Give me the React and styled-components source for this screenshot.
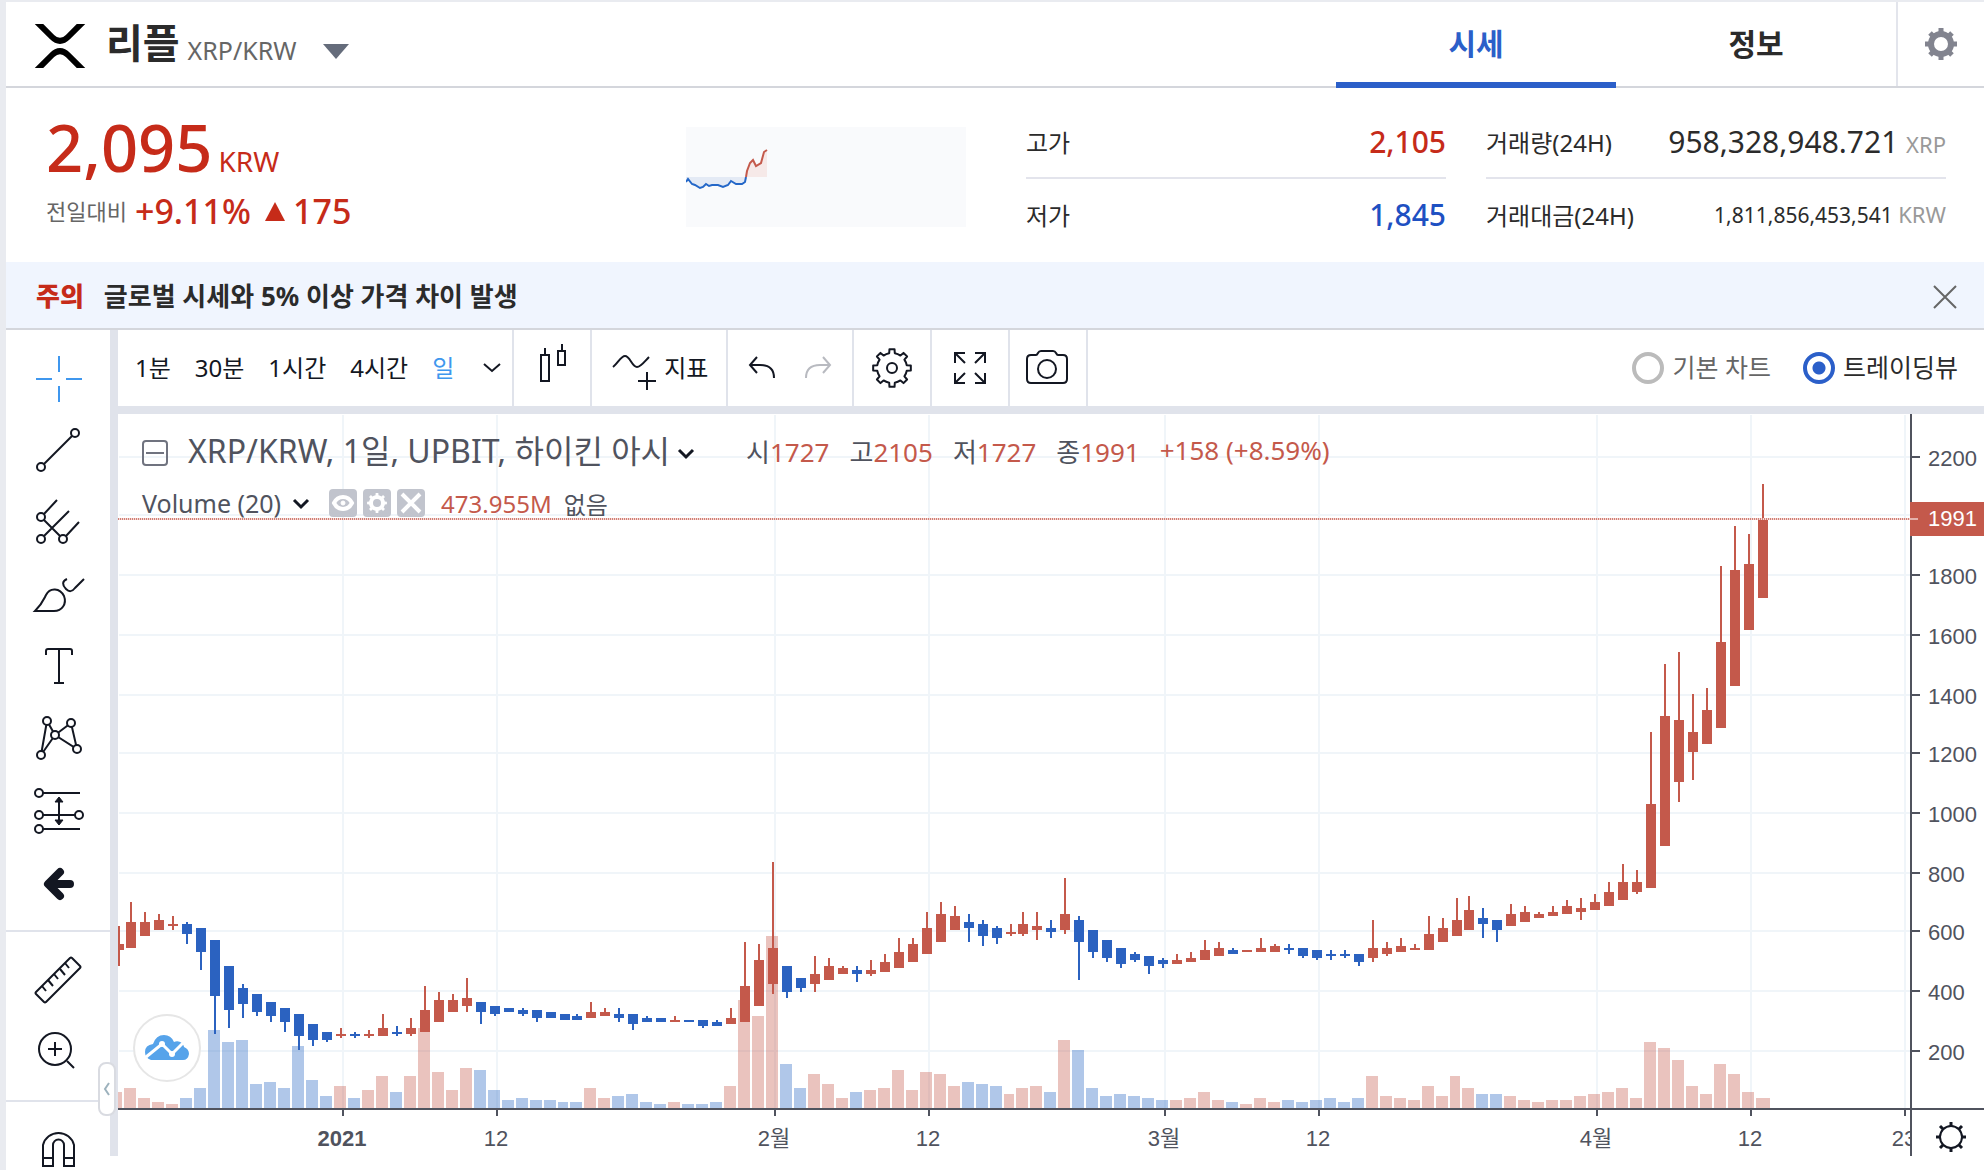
import React, { useState } from "react";
import styled, { createGlobalStyle } from "styled-components";

const RED = "#c4594b";
const BLUE = "#2b62c0";

// [up?, high, body top, body bottom, low, volume] for each day, heights in chart pixels
const CANDLES = [
  [1, 86, 104, 110, 126, 16], [1, 62, 82, 108, 108, 20], [1, 72, 82, 96, 96, 10],
  [1, 74, 80, 90, 90, 6], [1, 76, 84, 86, 90, 4], [0, 82, 84, 94, 104, 10],
  [0, 88, 88, 112, 130, 20], [0, 100, 100, 156, 194, 78], [0, 126, 126, 170, 188, 66],
  [0, 144, 148, 164, 178, 68], [0, 154, 154, 172, 176, 24], [0, 162, 162, 176, 182, 26],
  [0, 168, 168, 182, 192, 20], [0, 174, 174, 196, 210, 62], [0, 184, 184, 200, 206, 28],
  [0, 192, 192, 200, 202, 12], [1, 188, 194, 196, 198, 22], [0, 192, 194, 196, 198, 10],
  [1, 190, 194, 196, 198, 18], [1, 174, 188, 196, 196, 32], [0, 186, 192, 194, 196, 16],
  [1, 178, 188, 194, 196, 32], [1, 146, 170, 192, 192, 80], [1, 152, 160, 182, 182, 36],
  [1, 154, 160, 172, 172, 18], [1, 138, 158, 166, 172, 40], [0, 162, 162, 172, 184, 38],
  [0, 166, 166, 174, 176, 18], [0, 168, 168, 172, 172, 8], [0, 168, 170, 174, 176, 10],
  [0, 170, 170, 178, 182, 8], [0, 172, 172, 178, 178, 8], [0, 174, 174, 180, 180, 6],
  [0, 174, 176, 180, 180, 6], [1, 162, 172, 178, 178, 20], [1, 168, 172, 176, 176, 10],
  [0, 168, 174, 178, 182, 12], [0, 174, 174, 184, 190, 14], [0, 176, 178, 182, 182, 6],
  [0, 178, 178, 182, 182, 4], [1, 176, 180, 182, 182, 6], [0, 180, 180, 182, 182, 4],
  [0, 180, 180, 186, 188, 4], [0, 180, 182, 186, 186, 6], [1, 168, 178, 184, 184, 22],
  [1, 102, 146, 182, 182, 108], [1, 104, 120, 166, 166, 92], [1, 22, 108, 144, 154, 172],
  [0, 126, 126, 152, 158, 44], [0, 138, 138, 148, 152, 20], [1, 116, 134, 144, 152, 34],
  [1, 118, 126, 140, 140, 24], [1, 126, 128, 134, 134, 10], [0, 126, 130, 134, 142, 16],
  [1, 120, 130, 134, 136, 18], [1, 114, 122, 132, 132, 20], [1, 98, 112, 128, 128, 38],
  [1, 98, 104, 122, 122, 18], [1, 72, 88, 114, 114, 36], [1, 62, 74, 102, 102, 34],
  [1, 66, 76, 90, 90, 22], [0, 74, 82, 88, 102, 26], [0, 80, 84, 96, 106, 24],
  [0, 86, 88, 98, 104, 22], [1, 84, 92, 94, 96, 14], [1, 72, 84, 94, 96, 20],
  [1, 72, 86, 90, 100, 22], [0, 80, 88, 92, 98, 16], [1, 38, 74, 90, 94, 68],
  [0, 76, 80, 102, 140, 58], [0, 90, 90, 112, 118, 20], [0, 100, 100, 118, 122, 12],
  [0, 108, 108, 124, 128, 14], [0, 112, 114, 120, 122, 12], [0, 116, 116, 126, 134, 10],
  [0, 118, 120, 124, 128, 8], [1, 114, 120, 124, 124, 8], [1, 112, 118, 122, 122, 10],
  [1, 100, 110, 120, 120, 16], [1, 102, 108, 116, 116, 8], [0, 108, 110, 114, 114, 6],
  [1, 110, 110, 112, 112, 4], [1, 98, 108, 112, 112, 10], [1, 104, 106, 112, 112, 6],
  [0, 104, 108, 110, 114, 8], [0, 108, 108, 116, 118, 6], [0, 110, 110, 118, 120, 8],
  [0, 110, 114, 116, 120, 10], [0, 110, 114, 116, 118, 6], [0, 114, 114, 122, 126, 10],
  [1, 80, 108, 118, 122, 32], [1, 102, 108, 114, 116, 12], [1, 98, 106, 112, 112, 10],
  [1, 104, 108, 110, 110, 8], [1, 76, 94, 110, 110, 22], [1, 78, 88, 102, 102, 12],
  [1, 58, 80, 96, 96, 32], [1, 56, 70, 90, 90, 20], [0, 68, 78, 84, 98, 14],
  [0, 80, 80, 90, 102, 14], [1, 64, 74, 86, 86, 12], [1, 66, 72, 82, 82, 8],
  [1, 72, 74, 78, 78, 6], [1, 66, 72, 76, 76, 8], [1, 60, 66, 74, 74, 8],
  [1, 58, 68, 72, 80, 12], [1, 54, 62, 70, 70, 14], [1, 42, 52, 66, 66, 16],
  [1, 24, 42, 60, 60, 20], [1, 30, 42, 52, 54, 10], [1, -108, -36, 48, 48, 66],
  [1, -176, -124, 6, 6, 60], [1, -188, -120, -58, -38, 48], [1, -146, -108, -88, -60, 22],
  [1, -152, -130, -96, -96, 14], [1, -274, -198, -112, -112, 44], [1, -314, -270, -154, -154, 34],
  [1, -306, -276, -210, -210, 16], [1, -356, -322, -242, -242, 10],
];

const PRICES = [
  { y: 43, label: "2200" },
  { y: 101, label: "" },
  { y: 161, label: "1800" },
  { y: 221, label: "1600" },
  { y: 281, label: "1400" },
  { y: 339, label: "1200" },
  { y: 399, label: "1000" },
  { y: 459, label: "800" },
  { y: 517, label: "600" },
  { y: 577, label: "400" },
  { y: 637, label: "200" },
];

const DATES = [
  { x: 225, label: "2021", bold: true },
  { x: 379, label: "12" },
  { x: 657, label: "2월" },
  { x: 811, label: "12" },
  { x: 1047, label: "3월" },
  { x: 1201, label: "12" },
  { x: 1479, label: "4월" },
  { x: 1633, label: "12" },
  { x: 1787, label: "23" },
];

const PLOT_HEIGHT = 694;
const CANDLE_TOP = 426;
const PRICE_LINE = 105;

const candleX = (index) => {
  const i = index - 1;
  return 13 + 14 * i - 2 * Math.floor(i / 32);
};

const gearPath = (c, outer, inner, teeth) => {
  const step = (Math.PI * 2) / teeth;
  const at = (r, a) =>
    `${(c + r * Math.sin(a)).toFixed(2)} ${(c - r * Math.cos(a)).toFixed(2)}`;
  let d = "";
  for (let i = 0; i < teeth; i++) {
    const a = i * step;
    d += `${i ? "L" : "M"}${at(inner, a - step * 0.24)} L${at(outer, a - step * 0.17)} L${at(outer, a + step * 0.17)} L${at(inner, a + step * 0.24)} `;
    d += `A${inner} ${inner} 0 0 1 ${at(inner, a + step * 0.76)} `;
  }
  return d + "Z";
};

const TOOLS = [
  {
    name: "십자선",
    active: true,
    icon: <path d="M25 2v16M25 32v16M2 25h16M32 25h16" />,
  },
  {
    name: "추세선",
    icon: (
      <>
        <path d="M10 38L38 10" />
        <circle cx="7" cy="41" r="4" />
        <circle cx="41" cy="7" r="4" />
      </>
    ),
  },
  {
    name: "피치포크",
    icon: (
      <>
        <path d="M10 16L23 2M10 38L35 13M32 38L45 24M10 22L26 38" />
        <circle cx="7" cy="19" r="4" />
        <circle cx="7" cy="41" r="4" />
        <circle cx="29" cy="41" r="4" />
      </>
    ),
  },
  {
    name: "브러시",
    icon: (
      <path d="M1 41C8 34 9 31 12 25C16 17 26 18 30 26C33 34 28 41 20 41ZM33 9C28 11 28 15 32 19C35 22 38 22 41 18L50 9" />
    ),
  },
  {
    name: "텍스트",
    icon: <path d="M12 13V9Q12 7 14 7H36Q38 7 38 9V13M25 7V41M20 41H30" />,
  },
  {
    name: "패턴",
    icon: (
      <>
        <path d="M7 41L13 7L21 21ZM21 21L37 9L43 35Z" />
        <circle cx="13" cy="7" r="4" />
        <circle cx="37" cy="9" r="4" />
        <circle cx="21" cy="21" r="4" />
        <circle cx="43" cy="35" r="4" />
        <circle cx="7" cy="41" r="4" />
      </>
    ),
  },
  {
    name: "예측",
    icon: (
      <>
        <path d="M9 7H46M9 29H41M9 43H46M25 13V37" />
        <circle cx="5" cy="7" r="4" />
        <circle cx="5" cy="29" r="4" />
        <circle cx="5" cy="43" r="4" />
        <circle cx="45" cy="29" r="4" />
        <path d="M25 11L29 16H21ZM25 39L29 34H21Z" fill="currentColor" strokeWidth="1" />
      </>
    ),
  },
  {
    name: "아이콘",
    icon: (
      <path
        d="M36 26H15M26 14L14 26L26 38"
        strokeWidth="8"
        strokeLinecap="round"
        strokeLinejoin="round"
      />
    ),
  },
];

const MEASURE_TOOLS = [
  {
    name: "자",
    icon: (
      <>
        <path d="M2 36L36 2Q37 1 38 2L46 10Q47 11 46 12L12 46Q11 47 10 46L2 38Q1 37 2 36Z" />
        <path d="M8 30L12 35M14 24L19 30M20 18L24 23M26 13L31 19M31 7L35 12" />
      </>
    ),
  },
  {
    name: "확대",
    icon: (
      <>
        <circle cx="21" cy="21" r="16" />
        <path d="M14 21H28M21 14V28M33 33L40 40" />
      </>
    ),
  },
];

const MAGNET = (
  <path d="M9 40V19A16 16 0 0 1 40 19V40H30V19A5 5 0 0 0 19 19V40ZM9 32H19M30 32H40" />
);

const INTERVALS = ["1분", "30분", "1시간", "4시간", "일"];

const LineIcon = ({ children, width = 48 }) => (
  <Glyph width={width} height="48" viewBox={`0 0 ${width} 48`}>
    {children}
  </Glyph>
);

const Header = () => {
  const [tab, setTab] = useState("시세");
  return (
    <HeaderBar>
      <CoinButton>
        <svg width="52" height="44" viewBox="0 0 52 44" fill="none" stroke="#000" strokeWidth="6">
          <path d="M2 -3L18 13Q26 21 34 13L50 -3M2 47L18 31Q26 23 34 31L50 47" />
        </svg>
        <CoinName>리플</CoinName>
        <CoinPair>XRP/KRW</CoinPair>
        <CoinArrow width="26" height="15" viewBox="0 0 26 15">
          <path d="M0 0H26L13 15Z" fill="#656c7b" />
        </CoinArrow>
      </CoinButton>
      <Tabs>
        {["시세", "정보"].map((name) => (
          <Tab key={name} $active={tab === name} onClick={() => setTab(name)}>
            {name}
          </Tab>
        ))}
        <SettingsButton aria-label="설정">
          <svg width="34" height="34" viewBox="0 0 34 34" fill="none" stroke="#82848f">
            <circle cx="17" cy="17" r="10" strokeWidth="6" />
            <path
              d="M17 1v5M17 28v5M1 17h5M28 17h5M6 6l3 3M25 25l3 3M28 6l-3 3M6 28l3-3"
              strokeWidth="5"
            />
          </svg>
        </SettingsButton>
      </Tabs>
    </HeaderBar>
  );
};

const Summary = () => (
  <SummaryBar>
    <PriceBlock>
      <PriceLine>
        <Price>2,095</Price>
        <PriceUnit>KRW</PriceUnit>
      </PriceLine>
      <ChangeLine>
        <ChangeLabel>전일대비</ChangeLabel>
        <Change>+9.11%</Change>
        <ChangeArrow width="20" height="19" viewBox="0 0 20 19">
          <path d="M10 0L20 19H0Z" fill="#c62b19" />
        </ChangeArrow>
        <Change>175</Change>
      </ChangeLine>
    </PriceBlock>
    <Spark viewBox="0 0 280 100" fill="none">
      <path
        d="M0 50V55L2 52L6 57L9 58L14 61L17 60L20 57L23 59L26 58L32 58L37 60L42 58L45 54L50 57L56 57L59 55L60 50Z"
        fill="#e4eaf5"
      />
      <path d="M60 50L61 44L64 36L67 33L70 39L75 36L78 25L81 23V50Z" fill="#f6e9e8" />
      <path
        d="M0 55L2 52L6 57L9 58L14 61L17 60L20 57L23 59L26 58L32 58L37 60L42 58L45 54L50 57L56 57L59 55L60 50"
        stroke="#2467c8"
        strokeWidth="2"
      />
      <path d="M60 50L61 44L64 36L67 33L70 39L75 36L78 25L81 23" stroke={RED} strokeWidth="2" />
    </Spark>
    <Stats $width={420}>
      <Stat>
        <dt>고가</dt>
        <StatValue $color="#c62b19" $strong>2,105</StatValue>
      </Stat>
      <Stat>
        <dt>저가</dt>
        <StatValue $color="#1e50c2" $strong>1,845</StatValue>
      </Stat>
    </Stats>
    <Stats $width={460}>
      <Stat>
        <dt>거래량(24H)</dt>
        <StatValue>
          958,328,948.721 <Unit>XRP</Unit>
        </StatValue>
      </Stat>
      <Stat>
        <dt>거래대금(24H)</dt>
        <StatValue $small>
          1,811,856,453,541 <Unit>KRW</Unit>
        </StatValue>
      </Stat>
    </Stats>
  </SummaryBar>
);

const Toolbar = () => {
  const [interval, setInterval] = useState("일");
  const [chart, setChart] = useState("tv");
  return (
    <ToolbarRow>
      <Intervals>
        {INTERVALS.map((name) => (
          <IntervalButton key={name} $active={interval === name} onClick={() => setInterval(name)}>
            {name}
          </IntervalButton>
        ))}
        <IntervalButton aria-label="더보기">
          <Glyph width="24" height="16" viewBox="0 0 24 16">
            <path d="M4 6L12 13L20 6" />
          </Glyph>
        </IntervalButton>
      </Intervals>
      <ToolbarButton aria-label="차트 종류">
        <LineIcon>
          <path d="M13 11H21V37H13ZM17 4V11M30 7H37V21H30ZM34 0V7" />
        </LineIcon>
      </ToolbarButton>
      <ToolbarButton $wide>
        <LineIcon>
          <path d="M3 23C8 19 11 12 15 12C20 12 22 23 27 23C31 23 34 18 39 13M37 28V46M28 37H46" />
        </LineIcon>
        <ButtonText>지표</ButtonText>
      </ToolbarButton>
      <HistoryGroup>
        <PlainButton aria-label="실행 취소">
          <LineIcon width={28}>
            <path d="M9 13L2 21L9 29M2 21H12C22 21 26 26 26 34" />
          </LineIcon>
        </PlainButton>
        <PlainButton aria-label="다시 실행" disabled>
          <LineIcon width={28}>
            <path d="M19 13L26 21L19 29M26 21H16C6 21 2 26 2 34" />
          </LineIcon>
        </PlainButton>
      </HistoryGroup>
      <ToolbarButton aria-label="차트 설정">
        <LineIcon>
          <path d={gearPath(24, 19, 15, 8)} strokeLinejoin="round" />
          <circle cx="24" cy="24" r="5" />
        </LineIcon>
      </ToolbarButton>
      <ToolbarButton aria-label="전체 화면">
        <LineIcon>
          <path d="M9 19V9H19M9 9L19 19M29 9H39V19M39 9L29 19M9 29V39H19M9 39L19 29M39 29V39H29M39 39L29 29" />
        </LineIcon>
      </ToolbarButton>
      <ToolbarButton aria-label="스냅샷">
        <LineIcon>
          <path d="M7 11H12Q13 11 14 9Q15 7 17 7H29Q31 7 32 9Q33 11 34 11H39Q43 11 43 15V35Q43 39 39 39H7Q3 39 3 35V15Q3 11 7 11Z" />
          <circle cx="23" cy="25" r="9" />
        </LineIcon>
      </ToolbarButton>
      <ChartSwitch>
        <RadioLabel $checked={chart === "basic"}>
          <Radio
            type="radio"
            name="chart"
            checked={chart === "basic"}
            onChange={() => setChart("basic")}
          />
          <ButtonText>기본 차트</ButtonText>
        </RadioLabel>
        <RadioLabel $checked={chart === "tv"}>
          <Radio
            type="radio"
            name="chart"
            checked={chart === "tv"}
            onChange={() => setChart("tv")}
          />
          <ButtonText>트레이딩뷰</ButtonText>
        </RadioLabel>
      </ChartSwitch>
    </ToolbarRow>
  );
};

const Legend = () => (
  <LegendBox>
    <LegendRow>
      <PlainButton aria-label="접기">
        <svg width="26" height="26" viewBox="0 0 26 26" fill="none" stroke="#70737f" strokeWidth="2">
          <rect x="1" y="1" width="24" height="24" rx="3" />
          <path d="M4 13H22" />
        </svg>
      </PlainButton>
      <Symbol>XRP/KRW, 1일, UPBIT, 하이킨 아시</Symbol>
      <Chevron />
      <Ohlc>
        <span>시<b>1727</b></span>
        <span>고<b>2105</b></span>
        <span>저<b>1727</b></span>
        <span>종<b>1991</b></span>
        <b>+158 (+8.59%)</b>
      </Ohlc>
    </LegendRow>
    <LegendRow $small>
      <StudyName>Volume (20)</StudyName>
      <Chevron />
      <StudyButtons>
        <StudyButton aria-label="숨기기">
          <svg width="28" height="28" viewBox="0 0 28 28" fill="none" stroke="#fff">
            <path d="M5 14C9 6 19 6 23 14C19 22 9 22 5 14Z" strokeWidth="4" />
            <circle cx="14" cy="14" r="2" fill="#fff" strokeWidth="1" />
          </svg>
        </StudyButton>
        <StudyButton aria-label="설정">
          <svg width="28" height="28" viewBox="0 0 28 28">
            <path
              d={gearPath(14, 10, 8, 8) + "M14 10A4 4 0 1 0 14 18A4 4 0 1 0 14 10Z"}
              fill="#fff"
              fillRule="evenodd"
            />
          </svg>
        </StudyButton>
        <StudyButton aria-label="삭제">
          <svg width="28" height="28" viewBox="0 0 28 28" stroke="#fff" strokeWidth="4">
            <path d="M5 5L23 23M23 5L5 23" />
          </svg>
        </StudyButton>
      </StudyButtons>
      <b>473.955M</b>
      <span>없음</span>
    </LegendRow>
  </LegendBox>
);

const Chevron = () => (
  <Glyph width="16" height="16" viewBox="0 0 16 16">
    <path d="M1 5L8 12L15 5" strokeWidth="3" />
  </Glyph>
);

const Plot = () => (
  <PlotArea>
    <Canvas shapeRendering="crispEdges">
      {PRICES.map((p) => (
        <rect key={p.y} x="1" y={p.y - 1} width="100%" height="2" fill="#f0f5f9" />
      ))}
      {DATES.map((d) => (
        <rect key={d.x} x={d.x - 1} y="1" width="2" height="100%" fill="#f0f5f9" />
      ))}
      {CANDLES.map(([up, , , , , volume], i) => {
        const last = i === CANDLES.length - 1;
        return (
          <rect
            key={i}
            x={candleX(i) - 7}
            y={PLOT_HEIGHT - volume}
            width={last ? 14 : i % 32 === 0 ? 10 : 12}
            height={volume}
            fill={up ? RED : "#3a73c9"}
            opacity={up ? 0.36 : 0.4}
          />
        );
      })}
      {CANDLES.map(([up, high, top, bottom, low], i) => (
        <g key={i} fill={up ? RED : BLUE}>
          <rect x={candleX(i) - 1} y={CANDLE_TOP + high} width="2" height={low - high} />
          <rect x={candleX(i) - 5} y={CANDLE_TOP + top} width="10" height={bottom - top} />
        </g>
      ))}
      <line x1="0" x2="100%" y1={PRICE_LINE} y2={PRICE_LINE} stroke="#f3d9d6" strokeWidth="2" />
      <line
        x1="0"
        x2="100%"
        y1={PRICE_LINE}
        y2={PRICE_LINE}
        stroke="#d27f75"
        strokeWidth="2"
        strokeDasharray="1 1"
      />
    </Canvas>
    <Legend />
    <Watermark href="#tradingview" aria-label="TradingView">
      <svg width="44" height="28" viewBox="0 0 44 28">
        <path
          d="M6 26Q0 24 0 18Q0 11 8 10Q11 1 19 1Q26 1 29 8Q33 6 37 9Q39 12 39 13Q44 15 44 20Q43 26 38 26Z"
          fill="#56a3ea"
        />
        <path d="M1 23L17 10L27 20L40 7" fill="none" stroke="#fff" strokeWidth="3" />
        <circle cx="17" cy="10" r="3" fill="#fff" />
        <circle cx="27" cy="20" r="3" fill="#fff" />
      </svg>
    </Watermark>
  </PlotArea>
);

const PriceAxis = () => (
  <Canvas>
    <rect width="2" height="100%" fill="#50535e" />
    {PRICES.filter((p) => p.label).map((p) => (
      <g key={p.label} fill="#50535e">
        <rect x="2" y={p.y - 1} width="8" height="2" />
        <text x="18" y={p.y + 9}>{p.label}</text>
      </g>
    ))}
    <rect y="88" width="100%" height="34" fill={RED} />
    <rect y={PRICE_LINE - 1} width="8" height="2" fill="#e5b1ab" />
    <text x="18" y="112" fill="#fff">1991</text>
  </Canvas>
);

const TimeAxis = () => (
  <Canvas>
    <rect width="100%" height="2" fill="#50535e" />
    {DATES.map((d) => (
      <g key={d.x} fill="#50535e">
        <rect x={d.x - 1} y="2" width="2" height="6" />
        <text x={d.x - 1} y="38" textAnchor="middle" fontWeight={d.bold ? 700 : 400}>
          {d.label}
        </text>
      </g>
    ))}
  </Canvas>
);

const App = () => {
  const [notice, setNotice] = useState(true);
  return (
    <Page>
      <GlobalStyle />
      <Header />
      <Summary />
      {notice && (
        <Notice>
          <NoticeTag>주의</NoticeTag>
          <span>글로벌 시세와 5% 이상 가격 차이 발생</span>
          <CloseButton aria-label="닫기" onClick={() => setNotice(false)}>
            <svg width="24" height="24" viewBox="0 0 24 24" stroke="#666" strokeWidth="2">
              <path d="M1 1L23 23M23 1L1 23" />
            </svg>
          </CloseButton>
        </Notice>
      )}
      <Workspace>
        <Sidebar>
          <ToolGroup>
            {TOOLS.map((tool) => (
              <ToolButton key={tool.name} aria-label={tool.name} $active={tool.active}>
                <LineIcon>{tool.icon}</LineIcon>
              </ToolButton>
            ))}
          </ToolGroup>
          <ToolGroup>
            {MEASURE_TOOLS.map((tool) => (
              <ToolButton key={tool.name} aria-label={tool.name}>
                <LineIcon>{tool.icon}</LineIcon>
              </ToolButton>
            ))}
            <CollapseButton aria-label="도구 숨기기">
              <svg width="8" height="16" viewBox="0 0 8 16" fill="none" stroke="#9db2bd" strokeWidth="2">
                <path d="M6 2L2 8L6 14" />
              </svg>
            </CollapseButton>
          </ToolGroup>
          <ToolGroup>
            <ToolButton aria-label="자석 모드">
              <LineIcon>{MAGNET}</LineIcon>
            </ToolButton>
          </ToolGroup>
        </Sidebar>
        <ChartPane>
          <Toolbar />
          <ChartGrid>
            <Plot />
            <PriceAxis />
            <TimeAxis />
            <AxisCorner>
              <PlainButton aria-label="축 설정">
                <Glyph width="32" height="32" viewBox="0 0 32 32">
                  <circle cx="16" cy="16" r="11" />
                  <path
                    d="M16 1V5M16 27V31M1 16H5M27 16H31M5 5L8 8M24 24L27 27M27 5L24 8M5 27L8 24"
                    strokeWidth="3"
                  />
                </Glyph>
              </PlainButton>
            </AxisCorner>
          </ChartGrid>
        </ChartPane>
      </Workspace>
    </Page>
  );
};

const GlobalStyle = createGlobalStyle`
  * {
    box-sizing: border-box;
  }
  body {
    margin: 0;
    background: #fff;
    color: #2b2b2b;
    font-family: "Noto Sans", "Noto Sans CJK KR", sans-serif;
    font-size: 24px;
  }
  button {
    display: flex;
    align-items: center;
    padding: 0;
    border: 0;
    background: none;
    color: inherit;
    font: inherit;
    cursor: pointer;
  }
  dl, dt, dd {
    margin: 0;
  }
`;

const Page = styled.div`
  display: flex;
  flex-direction: column;
  height: 100vh;
  overflow: hidden;
  border-top: 2px solid #e9ebf0;
  border-left: 6px solid #e9ebf0;
`;

const Glyph = styled.svg`
  flex-shrink: 0;
  fill: none;
  stroke: currentColor;
  stroke-width: 2;
  overflow: visible;

  circle {
    fill: #fff;
  }
`;

const HeaderBar = styled.header`
  display: flex;
  justify-content: space-between;
  flex-shrink: 0;
  height: 86px;
  border-bottom: 2px solid #d4d6dc;
`;

const CoinButton = styled.button`
  padding: 4px 0 0 28px;
`;

const CoinName = styled.span`
  margin: 0 8px 0 20px;
  padding-bottom: 6px;
  font-size: 40px;
  font-weight: 700;
  line-height: 48px;
`;

const CoinPair = styled.span`
  margin: 8px 26px 0 0;
  color: #666;
  font-size: 25px;
`;

const CoinArrow = styled.svg`
  margin-top: 10px;
`;

const Tabs = styled.nav`
  display: flex;
`;

const Tab = styled.button`
  justify-content: center;
  width: 280px;
  margin-bottom: -2px;
  border-bottom: 6px solid ${(p) => (p.$active ? "#2b5fc9" : "transparent")};
  color: ${(p) => (p.$active ? "#2b5fc9" : "#2b2b2b")};
  font-size: 30px;
  font-weight: 600;
`;

const SettingsButton = styled.button`
  justify-content: center;
  width: 88px;
  border-left: 2px solid #e3e5ec;
`;

const SummaryBar = styled.section`
  display: flex;
  align-items: center;
  flex-shrink: 0;
  height: 174px;
  padding: 4px 38px 0 40px;
`;

const PriceBlock = styled.div`
  flex: 1;
  padding-bottom: 10px;
  color: #c62b19;
`;

const PriceLine = styled.div`
  display: flex;
  align-items: baseline;
  gap: 6px;
  line-height: 64px;
`;

const Price = styled.strong`
  font-size: 65px;
  font-weight: 500;
`;

const PriceUnit = styled.span`
  font-size: 28px;
`;

const ChangeLine = styled.div`
  display: flex;
  align-items: center;
  gap: 8px;
  line-height: 36px;
`;

const ChangeLabel = styled.span`
  color: #666;
  font-size: 22px;
`;

const Change = styled.span`
  font-size: 34px;
  font-weight: 500;
`;

const ChangeArrow = styled.svg`
  margin-left: 6px;
`;

const Spark = styled.svg`
  width: 280px;
  height: 100px;
  margin-right: 60px;
  background: #f9fafc;
`;

const Stats = styled.dl`
  width: ${(p) => p.$width}px;

  & + & {
    margin-left: 40px;
  }
`;

const Stat = styled.div`
  display: flex;
  align-items: center;
  justify-content: space-between;
  height: 72px;

  & + & {
    border-top: 2px solid #e3e4ec;
  }
`;

const StatValue = styled.dd`
  color: ${(p) => p.$color || "#2b2b2b"};
  font-size: ${(p) => (p.$small ? 21 : 30)}px;
  font-weight: ${(p) => (p.$strong ? 500 : 400)};
`;

const Unit = styled.span`
  color: #999;
  font-size: 22px;
`;

const Notice = styled.div`
  display: flex;
  align-items: center;
  gap: 20px;
  flex-shrink: 0;
  height: 68px;
  padding: 0 27px 0 30px;
  border-bottom: 2px solid #d4d6dc;
  background: #f0f5fe;
  font-size: 26px;
  font-weight: 700;
`;

const NoticeTag = styled.strong`
  color: #c62b19;
`;

const CloseButton = styled.button`
  margin: 4px 0 0 auto;
`;

const Workspace = styled.main`
  display: flex;
  align-items: flex-start;
`;

const Sidebar = styled.aside`
  flex-shrink: 0;
  width: 104px;
  color: #131722;
`;

const ToolGroup = styled.div`
  position: relative;
  padding: 12px 0;

  & + & {
    border-top: 2px solid #e0e3eb;
  }
`;

const ToolButton = styled.button`
  justify-content: center;
  width: 100%;
  height: 72px;
  color: ${(p) => (p.$active ? "#3f97ee" : "#131722")};
`;

const CollapseButton = styled.button`
  position: absolute;
  right: -6px;
  bottom: -16px;
  z-index: 1;
  justify-content: center;
  width: 18px;
  height: 54px;
  border: 2px solid #d9dbe1;
  border-radius: 8px;
  background: #fff;
`;

const ChartPane = styled.section`
  flex: 1;
  min-width: 0;
  border-left: 8px solid #e0e3eb;
`;

const ToolbarRow = styled.div`
  display: flex;
  height: 84px;
  border-bottom: 8px solid #e0e3eb;
  color: #131722;
`;

const Intervals = styled.div`
  display: flex;
  align-items: center;
  gap: 24px;
  padding: 0 8px 0 17px;
  border-right: 2px solid #e0e3eb;
`;

const IntervalButton = styled.button`
  height: 100%;
  padding-bottom: 4px;
  color: ${(p) => (p.$active ? "#3f97ee" : "#131722")};

  &:last-child {
    margin-left: 2px;
  }
`;

const ButtonText = styled.span`
  padding-bottom: 4px;
`;

const ToolbarButton = styled.button`
  justify-content: center;
  gap: 6px;
  width: ${(p) => (p.$wide ? 136 : 78)}px;
  border-right: 2px solid #e0e3eb;
`;

const HistoryGroup = styled.div`
  display: flex;
  align-items: center;
  gap: 28px;
  padding: 0 20px;
  border-right: 2px solid #e0e3eb;
`;

const PlainButton = styled.button`
  &:disabled {
    color: #b8bac0;
  }
`;

const ChartSwitch = styled.div`
  display: flex;
  align-items: center;
  gap: 32px;
  margin-left: auto;
  padding-right: 26px;
  font-size: 25px;
`;

const RadioLabel = styled.label`
  display: flex;
  align-items: center;
  gap: 8px;
  color: ${(p) => (p.$checked ? "#2b2b2b" : "#666")};
`;

const Radio = styled.input`
  appearance: none;
  width: 32px;
  height: 32px;
  margin: 0;
  border: 4px solid #bbb;
  border-radius: 50%;

  &:checked {
    border-color: #2b5fc9;
    background: radial-gradient(circle, #2b5fc9 6px, #fff 7px);
  }
`;

const ChartGrid = styled.div`
  display: grid;
  grid-template-columns: minmax(0, 1fr) 74px;
  grid-template-rows: ${PLOT_HEIGHT}px 48px;
`;

const PlotArea = styled.div`
  position: relative;
`;

const Canvas = styled.svg`
  display: block;
  width: 100%;
  height: 100%;

  text {
    font: 22px "Liberation Sans", "Noto Sans CJK KR", sans-serif;
  }
  text[font-weight="700"] {
    font-weight: 700;
  }
`;

const LegendBox = styled.div`
  position: absolute;
  top: 16px;
  left: 24px;
  color: #50535e;
  white-space: nowrap;

  b {
    color: ${RED};
    font-weight: 400;
  }
`;

const LegendRow = styled.div`
  display: flex;
  align-items: center;
  gap: ${(p) => (p.$small ? 12 : 8)}px;
  height: ${(p) => (p.$small ? 54 : 46)}px;
  font-size: 24px;

  & > ${Glyph} {
    color: #131722;
  }
`;

const Symbol = styled.span`
  margin-left: 12px;
  padding-bottom: 4px;
  font-size: 32px;
  line-height: 40px;
`;

const Ohlc = styled.div`
  display: flex;
  gap: 20px;
  margin-left: 44px;
  padding-bottom: 4px;
  font-size: 26px;
`;

const StudyName = styled.span`
  font-size: 25px;
`;

const StudyButtons = styled.div`
  display: flex;
  gap: 6px;
  margin: 0 4px 0 8px;
`;

const StudyButton = styled.button`
  border-radius: 4px;
  background: #c1c4cd;
`;

const Watermark = styled.a`
  position: absolute;
  bottom: 26px;
  left: 15px;
  display: flex;
  align-items: center;
  justify-content: center;
  width: 68px;
  height: 68px;
  border: 2px solid #e6e6e6;
  border-radius: 50%;
  background: #fff;
`;

const AxisCorner = styled.div`
  display: flex;
  align-items: center;
  justify-content: center;
  padding-left: 6px;
  padding-top: 8px;
  border-top: 2px solid #50535e;
  border-left: 2px solid #50535e;
  color: #131722;
`;

export default App;
